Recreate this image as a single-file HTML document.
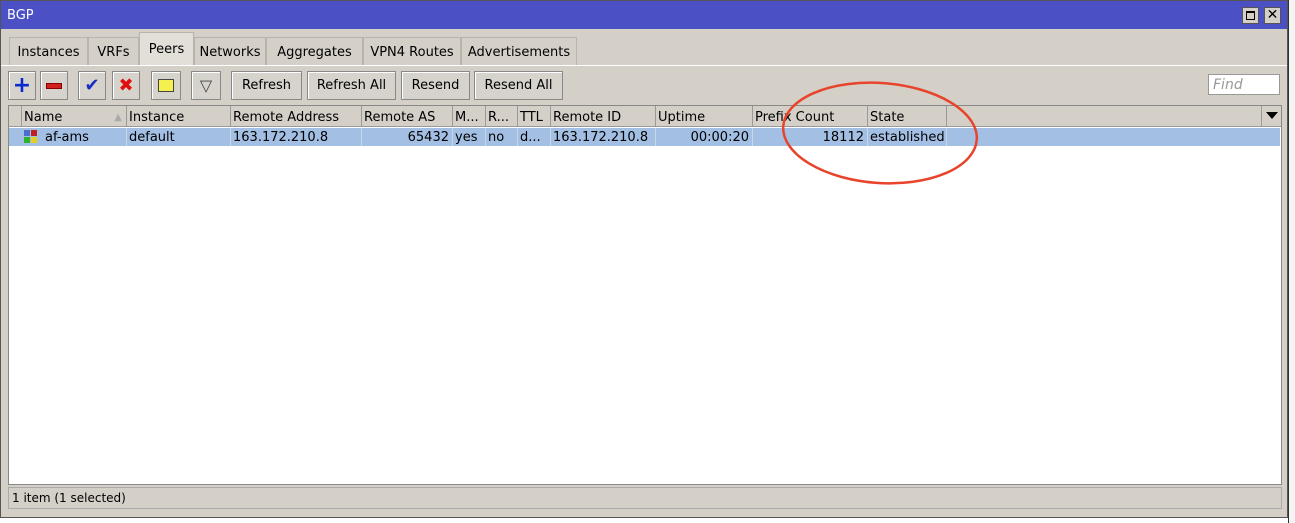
<!DOCTYPE html><html><head><style>
body{margin:0;width:1295px;height:523px;background:#fff;position:relative;overflow:hidden;font-family:"DejaVu Sans","Liberation Sans",sans-serif;font-size:13px;color:#000}
.a{position:absolute}
.btn{position:absolute;top:71px;height:29px;background:#d6d3cc;border:1px solid #888;box-shadow:inset 1px 1px #fff;box-sizing:border-box;text-align:center;line-height:28px;font-size:13px}
.tab{position:absolute;top:37px;height:28px;background:#d4d0c8;border:1px solid #b8b4ac;border-bottom:none;box-sizing:border-box;line-height:29px;text-align:center;font-size:13px}
.h{position:absolute;top:106px;height:21px;border-right:1px solid #999;box-sizing:border-box;padding-left:2px;line-height:24px;white-space:nowrap;overflow:hidden}
.c{position:absolute;top:128px;height:18px;line-height:20px;white-space:nowrap;padding-left:2px;box-sizing:border-box;border-right:1px solid #c8d6ea}
</style></head><body>
<div class="a" style="left:0;top:0;width:1288px;height:518px;background:#d4d0c8;border:1px solid #555;box-sizing:border-box"></div>
<div class="a" style="left:1px;top:1px;width:1286px;height:28px;background:#4b51c5"></div>
<div class="a" style="left:7px;top:8px;color:#fff;font-size:13px">BGP</div>
<div class="a" style="left:1242px;top:7px;width:17px;height:17px;background:#d4d0c8;border:1px solid #555;box-sizing:border-box"><div style="position:absolute;left:3px;top:3px;width:9px;height:9px;border:1px solid #000;border-top-width:2px;box-sizing:border-box"></div></div>
<div class="a" style="left:1264px;top:7px;width:17px;height:17px;background:#d4d0c8;border:1px solid #555;box-sizing:border-box;font-weight:bold;text-align:center;line-height:15px;font-size:14px">✕</div>
<div class="tab" style="left:9px;width:79px">Instances</div>
<div class="tab" style="left:88px;width:51px">VRFs</div>
<div class="tab" style="left:139px;top:32px;height:34px;width:55px;background:#e2dfd9;line-height:34px">Peers</div>
<div class="tab" style="left:194px;width:72px">Networks</div>
<div class="tab" style="left:266px;width:97px">Aggregates</div>
<div class="tab" style="left:363px;width:98px">VPN4 Routes</div>
<div class="tab" style="left:461px;width:116px">Advertisements</div>
<div class="a" style="left:1px;top:65px;width:1286px;height:1px;background:#fff"></div>
<div class="btn" style="left:8px;width:28px;color:#0a2ad0;font-weight:bold;font-size:22px">+</div>
<div class="btn" style="left:40px;width:28px"><div style="margin:11px auto;width:14px;height:4px;background:#d02020;border:1px solid #800"></div></div>
<div class="btn" style="left:78px;width:28px;color:#1830c0;font-size:18px;font-weight:bold">✔</div>
<div class="btn" style="left:112px;width:28px;color:#e01010;font-size:18px;font-weight:bold">✖</div>
<div class="btn" style="left:151px;width:30px"><div style="margin:7px auto;width:14px;height:11px;background:#f4f050;border:1px solid #444"></div></div>
<div class="btn" style="left:191px;width:30px;font-size:16px;color:#444">▽</div>
<div class="btn" style="left:231px;width:71px">Refresh</div>
<div class="btn" style="left:307px;width:89px">Refresh All</div>
<div class="btn" style="left:401px;width:69px">Resend</div>
<div class="btn" style="left:474px;width:89px">Resend All</div>
<div class="a" style="left:1208px;top:74px;width:72px;height:21px;background:#fff;border:1px solid #999;box-sizing:border-box;font-style:italic;color:#999;padding-left:4px;line-height:21px;font-size:14px">Find</div>
<div class="a" style="left:8px;top:105px;width:1274px;height:380px;background:#fff;border:1px solid #888;box-sizing:border-box"></div>
<div class="a" style="left:9px;top:106px;width:1272px;height:21px;background:#d4d0c8;border-bottom:1px solid #999;box-sizing:border-box"></div>
<div class="h" style="left:9px;width:13px"></div>
<div class="h" style="left:22px;width:105px">Name<span style="position:absolute;right:4px;color:#aaa;font-size:10px">▲</span></div>
<div class="h" style="left:127px;width:104px">Instance</div>
<div class="h" style="left:231px;width:131px">Remote Address</div>
<div class="h" style="left:362px;width:91px">Remote AS</div>
<div class="h" style="left:453px;width:33px">M...</div>
<div class="h" style="left:486px;width:32px">R...</div>
<div class="h" style="left:518px;width:33px">TTL</div>
<div class="h" style="left:551px;width:105px">Remote ID</div>
<div class="h" style="left:656px;width:97px">Uptime</div>
<div class="h" style="left:753px;width:115px">Prefix Count</div>
<div class="h" style="left:868px;width:79px">State</div>
<div class="h" style="left:947px;width:315px"></div>
<div class="a" style="left:1266px;top:112px;width:0;height:0;border:6px solid transparent;border-top:7px solid #000"></div>
<div class="a" style="left:9px;top:128px;width:1271px;height:18px;background:#a3bfe4"></div>
<div class="a" style="left:24px;top:130px;width:6px;height:6px;background:#4a6ed0"></div><div class="a" style="left:31px;top:130px;width:6px;height:6px;background:#c02020"></div>
<div class="a" style="left:24px;top:137px;width:6px;height:6px;background:#30b030"></div><div class="a" style="left:31px;top:137px;width:6px;height:6px;background:#e0d020"></div>
<div class="c" style="left:43px;width:84px">af-ams</div>
<div class="c" style="left:127px;width:104px">default</div>
<div class="c" style="left:231px;width:131px">163.172.210.8</div>
<div class="c" style="left:362px;width:91px;text-align:right;padding-right:3px">65432</div>
<div class="c" style="left:453px;width:33px">yes</div>
<div class="c" style="left:486px;width:32px">no</div>
<div class="c" style="left:518px;width:33px">d...</div>
<div class="c" style="left:551px;width:105px">163.172.210.8</div>
<div class="c" style="left:656px;width:97px;text-align:right;padding-right:3px">00:00:20</div>
<div class="c" style="left:753px;width:115px;text-align:right;padding-right:3px">18112</div>
<div class="c" style="left:868px;width:79px">established</div>
<div class="a" style="left:8px;top:487px;width:1274px;height:22px;border:1px solid #aaa;box-sizing:border-box;font-size:12px;line-height:20px;padding-left:3px">1 item (1 selected)</div>
<svg class="a" style="left:0;top:0" width="1295" height="523"><ellipse cx="880" cy="133" rx="97" ry="50" transform="rotate(4 880 133)" fill="none" stroke="#e8442c" stroke-width="2.5"/></svg>
<div class="a" style="left:1288px;top:0;width:7px;height:523px;background:#f4f4f4;border-left:1px solid #333"></div>
</body></html>
